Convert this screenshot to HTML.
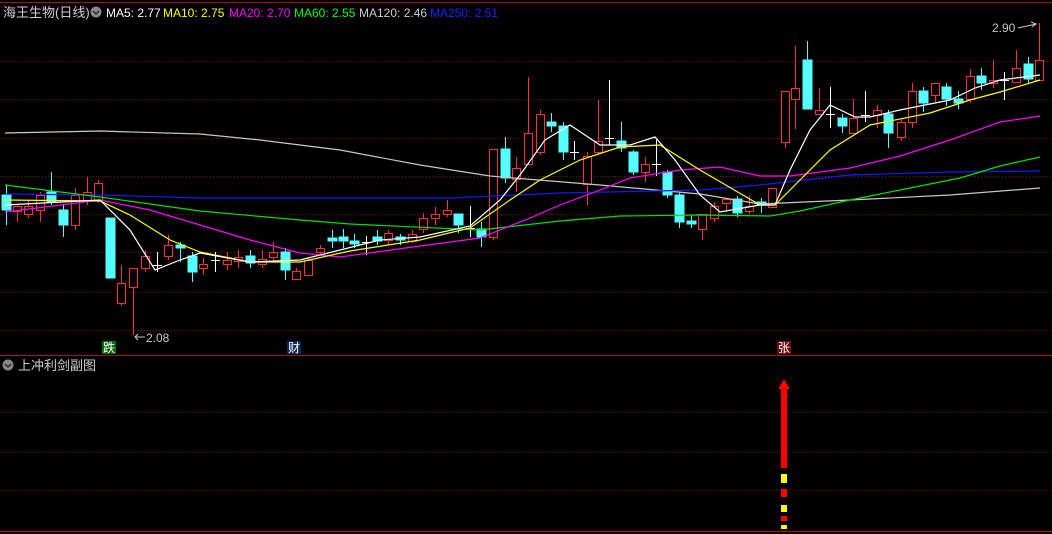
<!DOCTYPE html>
<html><head><meta charset="utf-8"><style>
html,body{margin:0;padding:0;background:#000;width:1052px;height:534px;overflow:hidden}
svg{display:block}
text{font-family:"Liberation Sans","Noto Sans CJK SC",sans-serif}
</style></head><body>
<svg width="1052" height="534" viewBox="0 0 1052 534" xmlns="http://www.w3.org/2000/svg">
<rect width="1052" height="534" fill="#000"/>
<line x1="0" y1="2.5" x2="1052" y2="2.5" stroke="#b01010"/>
<line x1="0" y1="355.5" x2="1052" y2="355.5" stroke="#b01010"/>
<line x1="0" y1="531.5" x2="1052" y2="531.5" stroke="#b01010"/>
<g stroke="#7a1414" stroke-dasharray="1,2">
<line x1="0" y1="61.5" x2="1052" y2="61.5"/><line x1="0" y1="99.5" x2="1052" y2="99.5"/>
<line x1="0" y1="138.5" x2="1052" y2="138.5"/><line x1="0" y1="176.5" x2="1052" y2="176.5"/>
<line x1="0" y1="214.5" x2="1052" y2="214.5"/><line x1="0" y1="252.5" x2="1052" y2="252.5"/>
<line x1="0" y1="292.5" x2="1052" y2="292.5"/><line x1="0" y1="330.5" x2="1052" y2="330.5"/>
<line x1="0" y1="412.5" x2="1052" y2="412.5"/><line x1="0" y1="452.5" x2="1052" y2="452.5"/>
<line x1="0" y1="490.5" x2="1052" y2="490.5"/>
</g>
<text x="3" y="17" font-size="13" fill="#d0d0d0">海王生物(日线)</text>
<circle cx="96" cy="12" r="5.5" fill="#888"/><path d="M93 11 L96 14 L99 11" stroke="#222" stroke-width="1.3" fill="none"/>
<text y="17" font-size="12"><tspan x="106" fill="#fff">MA5: 2.77</tspan><tspan x="163" fill="#ff0">MA10: 2.75</tspan><tspan x="229" fill="#f0f">MA20: 2.70</tspan><tspan x="294" fill="#0f0">MA60: 2.55</tspan><tspan x="359" fill="#ccc">MA120: 2.46</tspan><tspan x="430" fill="#2020ff">MA250: 2.51</tspan></text>

<g stroke-width="1">
<g stroke="#5ff" fill="#5ff">
<line x1="6.5" y1="185" x2="6.5" y2="225"/><rect x="2" y="195" width="9" height="15"/>
<line x1="51.5" y1="172" x2="51.5" y2="205"/><rect x="47" y="192" width="9" height="10"/>
<line x1="63.5" y1="205" x2="63.5" y2="237"/><rect x="59" y="210" width="9" height="15"/>
<line x1="110.5" y1="218" x2="110.5" y2="278"/><rect x="106" y="218" width="9" height="60"/>
<line x1="180.5" y1="242" x2="180.5" y2="262"/><rect x="176" y="245" width="9" height="3"/>
<line x1="192.5" y1="252" x2="192.5" y2="282"/><rect x="188" y="256" width="9" height="16"/>
<line x1="250.5" y1="250" x2="250.5" y2="268"/><rect x="246" y="256" width="9" height="7"/>
<line x1="285.5" y1="248" x2="285.5" y2="280"/><rect x="281" y="252" width="9" height="18"/>
<line x1="332.5" y1="230" x2="332.5" y2="248"/><rect x="328" y="238" width="9" height="3"/>
<line x1="343.5" y1="229" x2="343.5" y2="248"/><rect x="339" y="237" width="9" height="4"/>
<line x1="354.5" y1="234" x2="354.5" y2="248"/><rect x="350" y="241" width="9" height="3"/>
<line x1="377.5" y1="230" x2="377.5" y2="245"/><rect x="373" y="237" width="9" height="4"/>
<line x1="400.5" y1="234" x2="400.5" y2="245"/><rect x="396" y="237" width="9" height="3"/>
<line x1="458.5" y1="214" x2="458.5" y2="233"/><rect x="454" y="214" width="9" height="11"/>
<line x1="481.5" y1="222" x2="481.5" y2="247"/><rect x="477" y="229" width="9" height="8"/>
<line x1="505.5" y1="137" x2="505.5" y2="183"/><rect x="501" y="149" width="9" height="29"/>
<line x1="551.5" y1="113" x2="551.5" y2="132"/><rect x="547" y="122" width="9" height="4"/>
<line x1="563.5" y1="122" x2="563.5" y2="160"/><rect x="559" y="126" width="9" height="26"/>
<line x1="621.5" y1="122" x2="621.5" y2="152"/><rect x="617" y="141" width="9" height="7"/>
<line x1="633.5" y1="150" x2="633.5" y2="175"/><rect x="629" y="152" width="9" height="20"/>
<line x1="667.5" y1="170" x2="667.5" y2="198"/><rect x="663" y="172" width="9" height="23"/>
<line x1="679.5" y1="193" x2="679.5" y2="228"/><rect x="675" y="195" width="9" height="27"/>
<line x1="691.5" y1="215" x2="691.5" y2="228"/><rect x="687" y="221" width="9" height="3"/>
<line x1="737.5" y1="196" x2="737.5" y2="217"/><rect x="733" y="199" width="9" height="14"/>
<line x1="761.5" y1="198" x2="761.5" y2="213"/><rect x="757" y="202" width="9" height="3"/>
<line x1="807.5" y1="41" x2="807.5" y2="109"/><rect x="803" y="60" width="9" height="49"/>
<line x1="842.5" y1="114" x2="842.5" y2="133"/><rect x="838" y="118" width="9" height="8"/>
<line x1="888.5" y1="110" x2="888.5" y2="148"/><rect x="884" y="114" width="9" height="19"/>
<line x1="923.5" y1="87" x2="923.5" y2="112"/><rect x="919" y="91" width="9" height="12"/>
<line x1="946.5" y1="83" x2="946.5" y2="106"/><rect x="942" y="87" width="9" height="12"/>
<line x1="958.5" y1="91" x2="958.5" y2="109"/><rect x="954" y="99" width="9" height="4"/>
<line x1="981.5" y1="68" x2="981.5" y2="90"/><rect x="977" y="76" width="9" height="7"/>
<line x1="1028.5" y1="57" x2="1028.5" y2="83"/><rect x="1024" y="64" width="9" height="15"/>
</g>
<g stroke="#ff3030" fill="#000">
<line x1="17.5" y1="205" x2="17.5" y2="222"/><rect x="13.5" y="206.5" width="8" height="5"/>
<line x1="28.5" y1="200" x2="28.5" y2="218"/><rect x="24.5" y="206.5" width="8" height="8"/>
<line x1="40.5" y1="192" x2="40.5" y2="222"/><rect x="36.5" y="195.5" width="8" height="15"/>
<line x1="75.5" y1="188" x2="75.5" y2="230"/><rect x="71.5" y="195.5" width="8" height="30"/>
<line x1="87.5" y1="177" x2="87.5" y2="205"/><rect x="83.5" y="192.5" width="8" height="8"/>
<line x1="98.5" y1="180" x2="98.5" y2="203"/><rect x="94.5" y="183.5" width="8" height="17"/>
<line x1="121.5" y1="265" x2="121.5" y2="306"/><rect x="117.5" y="283.5" width="8" height="20"/>
<line x1="133.5" y1="268" x2="133.5" y2="335"/><rect x="129.5" y="268.5" width="8" height="19"/>
<line x1="145.5" y1="250" x2="145.5" y2="272"/><rect x="141.5" y="256.5" width="8" height="12"/>
<line x1="168.5" y1="235" x2="168.5" y2="260"/><rect x="164.5" y="245.5" width="8" height="11"/>
<line x1="203.5" y1="258" x2="203.5" y2="275"/><rect x="199.5" y="264.5" width="8" height="4"/>
<line x1="227.5" y1="252" x2="227.5" y2="270"/><rect x="223.5" y="260.5" width="8" height="4"/>
<line x1="238.5" y1="250" x2="238.5" y2="268"/><rect x="234.5" y="257.5" width="8" height="4"/>
<line x1="262.5" y1="250" x2="262.5" y2="268"/><rect x="258.5" y="259.5" width="8" height="5"/>
<line x1="273.5" y1="242" x2="273.5" y2="262"/><rect x="269.5" y="252.5" width="8" height="5"/>
<line x1="296.5" y1="268" x2="296.5" y2="280"/><rect x="292.5" y="271.5" width="8" height="8"/>
<line x1="308.5" y1="258" x2="308.5" y2="275"/><rect x="304.5" y="260.5" width="8" height="15"/>
<line x1="320.5" y1="245" x2="320.5" y2="255"/><rect x="316.5" y="248.5" width="8" height="4"/>
<line x1="388.5" y1="230" x2="388.5" y2="245"/><rect x="384.5" y="233.5" width="8" height="7"/>
<line x1="412.5" y1="230" x2="412.5" y2="243"/><rect x="408.5" y="234.5" width="8" height="7"/>
<line x1="423.5" y1="213" x2="423.5" y2="233"/><rect x="419.5" y="218.5" width="8" height="11"/>
<line x1="435.5" y1="207" x2="435.5" y2="225"/><rect x="431.5" y="214.5" width="8" height="4"/>
<line x1="447.5" y1="200" x2="447.5" y2="217"/><rect x="443.5" y="210.5" width="8" height="4"/>
<line x1="493.5" y1="149" x2="493.5" y2="240"/><rect x="489.5" y="149.5" width="8" height="88"/>
<line x1="516.5" y1="157" x2="516.5" y2="192"/><rect x="512.5" y="168.5" width="8" height="11"/>
<line x1="528.5" y1="77" x2="528.5" y2="164"/><rect x="524.5" y="133.5" width="8" height="31"/>
<line x1="540.5" y1="110" x2="540.5" y2="155"/><rect x="536.5" y="114.5" width="8" height="38"/>
<line x1="587.5" y1="152" x2="587.5" y2="205"/><rect x="583.5" y="156.5" width="8" height="28"/>
<line x1="598.5" y1="100" x2="598.5" y2="155"/><rect x="594.5" y="141.5" width="8" height="11"/>
<line x1="645.5" y1="157" x2="645.5" y2="182"/><rect x="641.5" y="164.5" width="8" height="8"/>
<line x1="702.5" y1="214" x2="702.5" y2="240"/><rect x="698.5" y="214.5" width="8" height="15"/>
<line x1="714.5" y1="202" x2="714.5" y2="222"/><rect x="710.5" y="206.5" width="8" height="12"/>
<line x1="726.5" y1="199" x2="726.5" y2="212"/><rect x="722.5" y="199.5" width="8" height="4"/>
<line x1="749.5" y1="196" x2="749.5" y2="214"/><rect x="745.5" y="206.5" width="8" height="5"/>
<line x1="772.5" y1="188" x2="772.5" y2="208"/><rect x="768.5" y="188.5" width="8" height="19"/>
<line x1="785.5" y1="91" x2="785.5" y2="148"/><rect x="781.5" y="91.5" width="8" height="51"/>
<line x1="795.5" y1="46" x2="795.5" y2="129"/><rect x="791.5" y="88.5" width="8" height="11"/>
<line x1="819.5" y1="88" x2="819.5" y2="114"/><rect x="815.5" y="110.5" width="8" height="4"/>
<line x1="853.5" y1="99" x2="853.5" y2="133"/><rect x="849.5" y="118.5" width="8" height="15"/>
<line x1="877.5" y1="105" x2="877.5" y2="128"/><rect x="873.5" y="110.5" width="8" height="5"/>
<line x1="901.5" y1="118" x2="901.5" y2="141"/><rect x="897.5" y="122.5" width="8" height="15"/>
<line x1="912.5" y1="83" x2="912.5" y2="128"/><rect x="908.5" y="91.5" width="8" height="31"/>
<line x1="935.5" y1="83" x2="935.5" y2="103"/><rect x="931.5" y="83.5" width="8" height="12"/>
<line x1="970.5" y1="69" x2="970.5" y2="103"/><rect x="966.5" y="76.5" width="8" height="23"/>
<line x1="993.5" y1="60" x2="993.5" y2="88"/><rect x="989.5" y="80.5" width="8" height="3"/>
<line x1="1016.5" y1="50" x2="1016.5" y2="83"/><rect x="1012.5" y="68.5" width="8" height="14"/>
<line x1="1039.5" y1="23" x2="1039.5" y2="80"/><rect x="1035.5" y="60.5" width="8" height="20"/>
</g>
<g stroke="#fff">
<line x1="157.5" y1="252" x2="157.5" y2="272"/><line x1="153" y1="265.5" x2="162" y2="265.5"/>
<line x1="215.5" y1="252" x2="215.5" y2="272"/><line x1="211" y1="260.5" x2="220" y2="260.5"/>
<line x1="366.5" y1="236" x2="366.5" y2="255"/><line x1="362" y1="242.5" x2="371" y2="242.5"/>
<line x1="470.5" y1="206" x2="470.5" y2="237"/><line x1="466" y1="228.5" x2="475" y2="228.5"/>
<line x1="574.5" y1="141" x2="574.5" y2="160"/><line x1="570" y1="152.5" x2="579" y2="152.5"/>
<line x1="609.5" y1="80" x2="609.5" y2="145"/><line x1="605" y1="138.5" x2="614" y2="138.5"/>
<line x1="656.5" y1="140" x2="656.5" y2="176"/><line x1="652" y1="164.5" x2="661" y2="164.5"/>
<line x1="830.5" y1="87" x2="830.5" y2="128"/><line x1="826" y1="114.5" x2="835" y2="114.5"/>
<line x1="865.5" y1="91" x2="865.5" y2="122"/><line x1="861" y1="115.5" x2="870" y2="115.5"/>
<line x1="1004.5" y1="72" x2="1004.5" y2="100"/><line x1="1000" y1="80.5" x2="1009" y2="80.5"/>
</g>
</g>

<g fill="none" stroke-width="1.2">
<polyline stroke="#c8c8c8" points="5,133 100,131 200,134 260,140 340,150 420,165 490,176 600,185 700,194 760,204 850,200 950,195 1040,188"/>
<polyline stroke="#1818ff" points="5,194 100,195 200,198 330,198 450,198 560,193 700,190 760,185 850,175 950,172 1040,171"/>
<polyline stroke="#00e000" points="5,185 100,197 200,211 300,220 350,224 480,230 560,221 620,216 700,215 770,216 800,211 850,200 900,190 960,178 1000,166 1040,157"/>
<polyline stroke="#f0f" points="5,212 100,200 150,210 200,225 250,240 300,253 340,257 420,246 480,238 530,218 560,205 600,190 630,178 680,170 720,167 760,176 790,176 850,168 900,156 950,140 1000,122 1040,116"/>
<polyline stroke="#ff0" points="5,200 100,201 130,215 170,240 200,252 250,262 300,262 350,251 420,240 470,228 510,200 540,180 580,160 620,147 660,145 700,170 760,205 775,205 800,180 830,150 870,125 930,113 970,100 1000,92 1040,80"/>
<polyline stroke="#fff" points="5,205 100,200 130,230 155,270 180,260 200,253 250,262 300,260 340,250 380,240 420,237 470,226 500,200 520,175 545,140 570,125 600,145 630,145 655,137 675,160 700,195 720,212 760,205 775,205 790,170 810,130 830,105 855,117 870,117 900,110 950,100 975,88 1000,80 1040,75"/>
</g>

<text x="992" y="32" font-size="12" fill="#c8c8c8">2.90</text>
<path d="M1018 28 L1036 24 M1031 22 L1036 24 L1032 27" stroke="#c8c8c8" fill="none"/>
<path d="M135 337 L145 337 M138 334 L135 337 L138 340" stroke="#c8c8c8" fill="none"/>
<text x="146" y="342" font-size="12" fill="#c8c8c8">2.08</text>

<rect x="102" y="341" width="14" height="13" fill="#0a6a0a"/>
<text x="103" y="352" font-size="12" fill="#fff">跌</text>
<rect x="287" y="341" width="14" height="13" fill="#0a2a5a"/>
<text x="288" y="352" font-size="12" fill="#fff">财</text>
<rect x="777" y="341" width="14" height="13" fill="#6a0a0a"/>
<text x="778" y="352" font-size="12" fill="#fff">张</text>

<circle cx="8" cy="365" r="5.5" fill="#888"/><path d="M5 364 L8 367 L11 364" stroke="#222" stroke-width="1.3" fill="none"/>
<text x="18" y="370" font-size="13" fill="#d0d0d0">上冲利剑副图</text>

<rect x="781" y="388" width="6" height="80" fill="#f00"/>
<polygon points="784,379 778,389 790,389" fill="#f00"/>
<rect x="781" y="474" width="6" height="9" fill="#ff0"/>
<rect x="781" y="489" width="6" height="8" fill="#f00"/>
<rect x="781" y="505" width="6" height="7" fill="#ff0"/>
<rect x="781" y="516" width="6" height="5" fill="#f00"/>
<rect x="781" y="525" width="6" height="4" fill="#ff0"/>
</svg>
</body></html>
